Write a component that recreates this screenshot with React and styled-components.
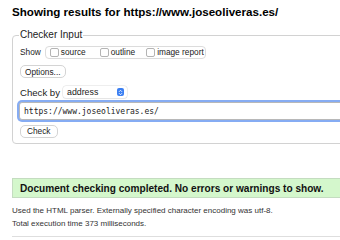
import React from 'react'
import styled, { createGlobalStyle } from 'styled-components'

const Global = createGlobalStyle`
  html, body {
    margin: 0;
    padding: 0;
    background: #fff;
    overflow: hidden;
  }
  body {
    font-family: "Liberation Sans", Arial, sans-serif;
    color: #111;
  }
`

const Page = styled.div`
  width: 520px;
  padding: 5px 0 0 12px;
`

const Title = styled.h2`
  margin: 0 0 10px;
  font-size: 11.6px;
  line-height: 14px;
  font-weight: bold;
  color: #000;
`

const Fieldset = styled.fieldset`
  margin: 0;
  padding: 0 8px 6px 7px;
  border: 1px solid #d2d2d2;
  border-radius: 4px;
`

const Legend = styled.legend`
  padding: 0 1px;
  margin-left: -1px;
  font-size: 10px;
  line-height: 12px;
  color: #222;
`

const Row = styled.div`
  display: flex;
  align-items: center;
  gap: ${(p) => p.gap || 4}px;
  margin-top: ${(p) => p.top || 0}px;
  height: ${(p) => p.h || 12}px;
`

const Label = styled.span`
  font-size: ${(p) => p.size || 8.3}px;
  color: #222;
`

const Group = styled.div`
  display: flex;
  align-items: center;
  height: 11px;
  padding: 0 1px 0 4px;
  border: 1px solid #dcdcdc;
  border-radius: 4px;
`

const Check = styled.label`
  display: flex;
  align-items: center;
  margin-right: ${(p) => p.gap || 0}px;
  font-size: 8.3px;
  color: #222;
`

const Box = styled.span`
  width: 7px;
  height: 7px;
  margin-right: 2px;
  border: 1px solid #b4b4b4;
  border-radius: 2px;
  background: #fff;
`

const Button = styled.button`
  display: flex;
  align-items: center;
  height: 13px;
  padding: 0 ${(p) => p.pad || 4}px;
  margin: 0;
  font-family: "Liberation Sans", Arial, sans-serif;
  font-size: 8.3px;
  color: #222;
  background: #fff;
  border: 1px solid #d4d4d4;
  border-radius: 5px;
`

const Select = styled.div`
  display: flex;
  align-items: center;
  justify-content: space-between;
  width: 57px;
  height: 12px;
  padding: 0 3px 0 4px;
  font-size: 8.8px;
  color: #222;
  background: #fff;
  border-radius: 3px;
  box-shadow: 0 0 0 0.5px #ddd, 0 1px 1px rgba(0, 0, 0, 0.08);
`

const Stepper = styled.span`
  display: flex;
  align-items: center;
  justify-content: center;
  width: 7px;
  height: 8px;
  border-radius: 2px;
  background: #3b7ff2;
`

const Input = styled.div`
  display: flex;
  align-items: center;
  height: 16px;
  margin: 4px -20px 0 -1px;
  padding-left: 4px;
  font-family: "DejaVu Sans Mono", "Liberation Mono", monospace;
  font-size: 8px;
  color: #222;
  background: #fff;
  border: 1px solid #b8b8b8;
  border-radius: 3px;
  box-shadow: 0 0 0 2px #86acf3;
`

const Success = styled.p`
  display: flex;
  align-items: center;
  height: 18px;
  margin: 34px 0 0;
  padding: 0 7px;
  font-size: 10.1px;
  font-weight: bold;
  color: #111;
  background: #d4f7cc;
  border: 1px solid #c4dcc0;
`

const Detail = styled.p`
  margin: ${(p) => p.top || 0}px 0 0;
  font-size: 8px;
  line-height: 13px;
  color: #333;
`

const Rule = styled.hr`
  margin: 6px 0 0;
  border: 0;
  border-top: 1px solid #dedede;
`

export default function App() {
  return (
    <Page>
      <Global />
      <Title>Showing results for https://www.joseoliveras.es/</Title>
      <Fieldset>
        <Legend>Checker Input</Legend>
        <Row top={5} gap={4}>
          <Label>Show</Label>
          <Group>
            <Check gap={14}><Box />source</Check>
            <Check gap={11}><Box />outline</Check>
            <Check><Box />image report</Check>
          </Group>
        </Row>
        <Row top={7} h={13}>
          <Button>Options...</Button>
        </Row>
        <Row top={8} gap={3}>
          <Label size={9.6}>Check by</Label>
          <Select>
            address
            <Stepper>
              <svg width="5" height="7" viewBox="0 0 5 7">
                <path d="M1 2.8 L2.5 1.3 L4 2.8 M1 4.2 L2.5 5.7 L4 4.2" fill="none" stroke="#fff" strokeWidth="0.9" />
              </svg>
            </Stepper>
          </Select>
        </Row>
        <Input>https://www.joseoliveras.es/</Input>
        <Row top={5} h={12}>
          <Button pad={6}>Check</Button>
        </Row>
      </Fieldset>
      <Success>Document checking completed. No errors or warnings to show.</Success>
      <Detail top={6}>Used the HTML parser. Externally specified character encoding was utf-8.</Detail>
      <Detail top={0}>Total execution time 373 milliseconds.</Detail>
      <Rule />
    </Page>
  )
}
